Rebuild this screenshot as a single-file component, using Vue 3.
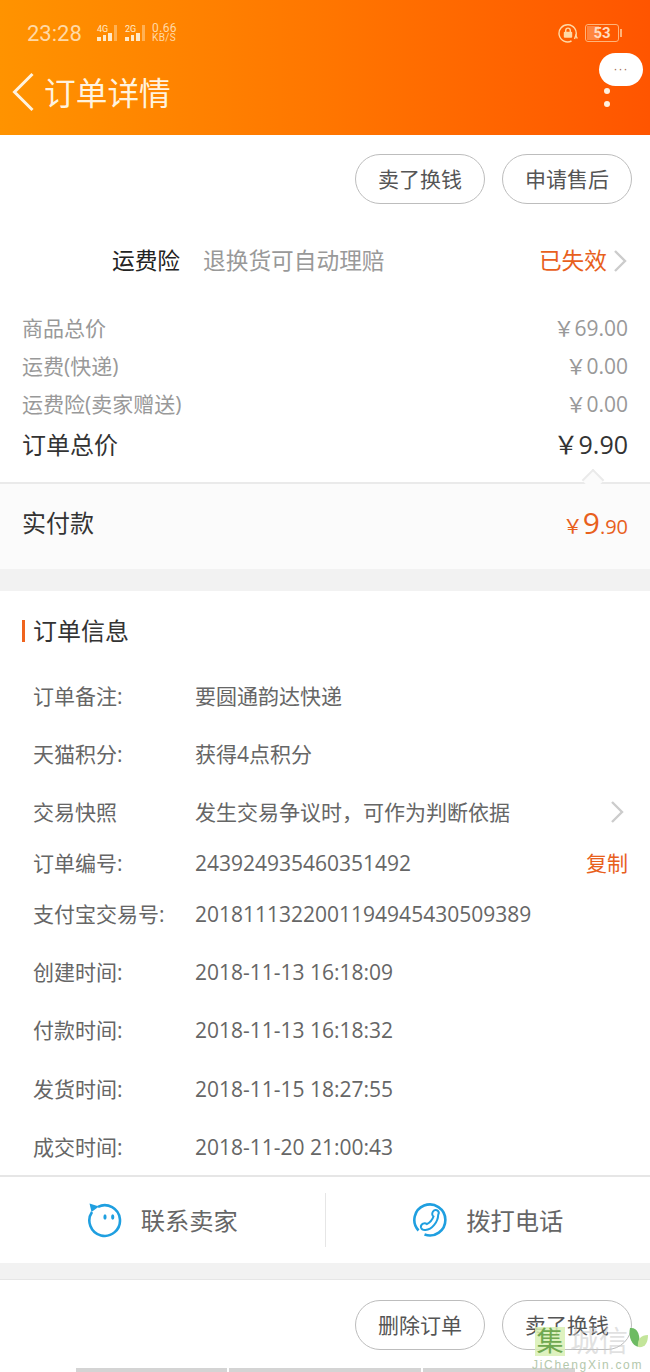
<template>
  <div class="page">
    <header class="header">
      <div class="status-bar">
        <span class="time">23:28</span>
        <div class="signal">
          <span class="net">4G</span>
          <i style="height: 4px"></i><i style="height: 6px"></i><i style="height: 8px"></i><i class="dim" style="height: 16px"></i>
        </div>
        <div class="signal">
          <span class="net">2G</span>
          <i style="height: 4px"></i><i style="height: 6px"></i><i style="height: 8px"></i><i class="dim" style="height: 16px"></i>
        </div>
        <div class="speed"><span>0.66</span><span>KB/S</span></div>
        <div class="status-right">
          <svg class="rotate-lock" viewBox="0 0 20 20" fill="none" stroke="currentColor" stroke-width="1.4">
            <path d="M17.8 13A8.6 8.6 0 1 0 13.500 18"/>
            <path d="M16.500 16l1.300-3.500 1.500 3"/>
            <rect x="5.800" y="8.800" width="8.400" height="6" rx="1" fill="currentColor" stroke="none"/>
            <path d="M7.700 9V7.400a2.300 2.300 0 0 1 4.600 0V9"/>
          </svg>
          <div class="battery"><span class="battery-fill"></span><span class="battery-num">53</span></div>
          <span class="battery-tip"></span>
        </div>
      </div>
      <div class="title-bar">
        <svg class="back" viewBox="0 0 24 40" fill="none" stroke="currentColor" stroke-width="3">
          <polyline points="21.5,2 3.500,20 21.5,38"></polyline>
        </svg>
        <span class="title">订单详情</span>
        <div class="more">
          <div class="bubble">···</div>
          <i></i>
          <i></i>
        </div>
      </div>
    </header>

    <div class="btn-row top">
      <button class="pill">卖了换钱</button>
      <button class="pill">申请售后</button>
    </div>

    <div class="insurance">
      <span class="ins-name">运费险</span>
      <span class="ins-desc">退换货可自动理赔</span>
      <span class="ins-state">已失效</span>
      <svg class="chevron" viewBox="0 0 14 22" fill="none" stroke="currentColor" stroke-width="2.400">
        <polyline points="2,1 12,11 2,21"></polyline>
      </svg>
    </div>

    <div class="prices">
      <div v-for="p in prices" :key="p.label" class="price-row">
        <span>{{ p.label }}</span>
        <span>￥{{ p.value }}</span>
      </div>
      <div class="price-row total">
        <span>订单总价</span>
        <span class="total-value">￥9.90</span>
      </div>
    </div>

    <div class="paid">
      <span class="notch"></span>
      <span class="paid-label">实付款</span>
      <span class="paid-value"><span class="paid-yen">￥</span><span class="paid-int">9</span>.90</span>
    </div>

    <div class="band"></div>

    <section class="info">
      <h2 class="info-title">订单信息</h2>
      <div
        v-for="row in rows"
        :key="row.label"
        class="info-row"
        :style="{ height: row.h + 'px' }"
      >
        <span class="info-label">{{ row.label }}</span>
        <span class="info-value" :class="{ 'is-cjk': row.cjk }">{{ row.value }}</span>
        <svg v-if="row.arrow" class="chevron info-arrow" viewBox="0 0 14 22" fill="none" stroke="currentColor" stroke-width="2.400">
          <polyline points="2,1 12,11 2,21"></polyline>
        </svg>
        <span v-if="row.copy" class="copy">复制</span>
      </div>
    </section>

    <div class="actions">
      <div class="action">
        <svg class="action-icon" viewBox="0 0 36 36" fill="none" stroke="#1f9fe0" stroke-width="2.600">
          <path d="M5 10A15.300 15.300 0 1 0 11 4.800"/>
          <path d="M2.500 1.500 L12 4.500 L4.500 10 Z" fill="#1f9fe0" stroke="none"/>
          <ellipse cx="18" cy="15" rx="1.600" ry="2.800" fill="#1f9fe0" stroke="none"/>
          <ellipse cx="25.700" cy="15" rx="1.600" ry="2.800" fill="#1f9fe0" stroke="none"/>
        </svg>
        <span class="action-text">联系卖家</span>
      </div>
      <div class="action">
        <svg class="action-icon" viewBox="0 0 36 36" fill="none" stroke="#1f9fe0" stroke-width="2.600">
          <path d="M6.500 28.500A15.500 15.500 0 1 1 12.500 32.500"/>
          <path d="M21 9.500c1.500-2 3.500-2 4.800-.8 1.200 1.200 1.200 2.800.4 4C26 20 20 27.500 13.500 28c-2 .2-4-1-4.500-2.500-.5-1.800.5-3 2-3.800 1.500-.7 2.800-.5 3.800.4C18 20.500 20.500 17.500 21.500 14.500 20 13.500 19.800 11.200 21 9.500z" stroke-width="2"/>
        </svg>
        <span class="action-text">拨打电话</span>
      </div>
    </div>

    <div class="band small"></div>

    <div class="btn-row bottom">
      <button class="pill">删除订单</button>
      <button class="pill">卖了换钱</button>
    </div>

    <div class="home-bars">
      <i style="width: 151px"></i>
      <i style="width: 192px"></i>
      <i style="width: 152px"></i>
    </div>

    <div class="watermark">
      <span class="wm-box">集</span>
      <span class="wm-name">城信</span>
      <svg class="wm-leaf" viewBox="0 0 20 24">
        <path d="M2 1c7-1 11 6 9 19C4 19 0 10 2 1z" fill="#6dbb63"/>
        <path d="M10 20c-1-8 3-12 10-12 0 8-3 13-10 12z" fill="#c3e59a"/>
      </svg>
      <span class="wm-url">JiChengXin.com</span>
    </div>
  </div>
</template>

<script setup>
const prices = [
  { label: '商品总价', value: '69.00' },
  { label: '运费(快递)', value: '0.00' },
  { label: '运费险(卖家赠送)', value: '0.00' }
]

const rows = [
  { label: '订单备注:', value: '要圆通韵达快递', h: 58, cjk: true },
  { label: '天猫积分:', value: '获得4点积分', h: 58, cjk: true },
  { label: '交易快照', value: '发生交易争议时，可作为判断依据', h: 58, cjk: true, arrow: true },
  { label: '订单编号:', value: '243924935460351492', h: 44, copy: true },
  { label: '支付宝交易号:', value: '2018111322001194945430509389', h: 58 },
  { label: '创建时间:', value: '2018-11-13 16:18:09', h: 58 },
  { label: '付款时间:', value: '2018-11-13 16:18:32', h: 58 },
  { label: '发货时间:', value: '2018-11-15 18:27:55', h: 59 },
  { label: '成交时间:', value: '2018-11-20 21:00:43', h: 58 }
]
</script>

<style>
html, body {
  margin: 0;
  background: #fff;
}
</style>

<style scoped>
.page {
  position: relative;
  width: 650px;
  height: 1372px;
  overflow: hidden;
  background: #fff;
  font-family: "Open Sans", "Noto Sans CJK SC", sans-serif;
  color: #333;
}

.header {
  height: 135px;
  background: linear-gradient(90deg, #ff9300 0%, #ff7600 50%, #ff5500 100%);
  color: #fff;
}

.status-bar {
  height: 66px;
  display: flex;
  align-items: center;
  padding-right: 28px;
  padding-left: 27px;
  color: #ffd9a6;
}

.time {
  width: 54px;
  margin-right: 15px;
  font-family: Roboto, sans-serif;
  font-size: 22px;
}

.signal {
  position: relative;
  display: flex;
  align-items: flex-end;
  gap: 2px;
  height: 16px;
  padding-left: 1px;
  margin-right: 7px;
}

.signal i {
  width: 3.500px;
  background: #ffe9c8;
}

.signal i.dim {
  background: rgba(255, 220, 170, 0.5);
}

.net {
  position: absolute;
  left: 1px;
  top: 0;
  font-family: Roboto, sans-serif;
  font-size: 9px;
  line-height: 8px;
  color: #ffe9c8;
}

.speed {
  display: flex;
  flex-direction: column;
  font-family: Roboto, sans-serif;
  font-size: 10px;
  line-height: 9px;
  letter-spacing: 0.4px;
}

.speed span:first-child {
  font-size: 12px;
}

.status-right {
  margin-left: auto;
  display: flex;
  align-items: center;
}

.rotate-lock {
  width: 20px;
  height: 20px;
  margin-right: 7px;
}

.battery {
  position: relative;
  box-sizing: border-box;
  width: 34px;
  height: 18px;
  border: 1px solid #ffb47a;
  border-radius: 3px;
  display: flex;
  align-items: center;
  justify-content: center;
}

.battery-fill {
  position: absolute;
  left: 1px;
  top: 1px;
  bottom: 1px;
  width: 12px;
  background: rgba(255, 200, 160, 0.4);
}

.battery-num {
  position: relative;
  font-family: Roboto, sans-serif;
  font-size: 15px;
  font-weight: 700;
  line-height: 16px;
  color: #ffdcc0;
}

.battery-tip {
  width: 2px;
  height: 8px;
  margin-left: 1px;
  background: #ffb47a;
}

.title-bar {
  position: relative;
  height: 52px;
  display: flex;
  align-items: center;
  padding-left: 11px;
}

.back {
  width: 24px;
  height: 40px;
  margin-right: 9px;
  color: #fff3df;
}

.title {
  padding-bottom: 2px;
  font-family: "Noto Sans CJK SC", sans-serif;
  font-size: 31.700px;
  line-height: 50px;
  color: #fff3df;
}

.more {
  position: absolute;
  left: 599px;
  top: -13px;
  width: 44px;
  display: flex;
  flex-direction: column;
  align-items: center;
}

.bubble {
  width: 44px;
  height: 33px;
  border-radius: 17px;
  background: #fff;
  color: #a06a50;
  font-family: "Liberation Sans", sans-serif;
  font-size: 12px;
  letter-spacing: 1px;
  line-height: 33px;
  text-align: center;
}

.more i {
  width: 6px;
  height: 6px;
  margin-top: 7px;
  margin-right: 28px;
  border-radius: 50%;
  background: #fff0e0;
}

.more i:first-of-type {
  margin-top: 2px;
}

.btn-row {
  display: flex;
  justify-content: flex-end;
  gap: 17px;
  padding-right: 18px;
}

.btn-row.top {
  padding-top: 19px;
}

.btn-row.bottom {
  padding-top: 20px;
}

.pill {
  width: 130px;
  height: 50px;
  padding: 0 0 2px;
  box-sizing: border-box;
  background: #fff;
  border: 1px solid #bdbdbd;
  border-radius: 25px;
  font-family: inherit;
  font-size: 21px;
  color: #555;
}

.insurance {
  display: flex;
  align-items: center;
  height: 40px;
  margin-top: 37px;
  padding: 0 23px 0 112px;
  font-size: 22.700px;
}

.insurance span {
  padding-bottom: 4px;
}

.ins-name {
  color: #222;
  margin-right: 23px;
}

.ins-desc {
  color: #999;
}

.ins-state {
  margin-left: auto;
  margin-right: 6px;
  color: #e8601c;
}

.chevron {
  width: 14px;
  height: 22px;
  color: #ccc;
}

.prices {
  margin-top: 28px;
  padding: 0 22px;
  font-size: 21px;
  color: #999;
}

.price-row {
  display: flex;
  justify-content: space-between;
  align-items: center;
  box-sizing: border-box;
  height: 38px;
  padding-bottom: 2px;
}

.price-row.total {
  height: 44px;
  padding-bottom: 4px;
  font-size: 24px;
  color: #333;
}

.total-value {
  font-size: 25px;
}

.paid {
  position: relative;
  display: flex;
  justify-content: space-between;
  align-items: center;
  box-sizing: border-box;
  height: 87px;
  margin-top: 15px;
  padding: 0 22px 8px;
  background: #fbfbfb;
  border-top: 2px solid #eaeaea;
}

.notch {
  position: absolute;
  left: 585px;
  top: -12px;
  width: 16px;
  height: 16px;
  box-sizing: border-box;
  background: #fbfbfb;
  border-top: 2px solid #eaeaea;
  border-left: 2px solid #eaeaea;
  transform: rotate(45deg);
}

.paid-label {
  padding-bottom: 2px;
  font-size: 24px;
}

.paid-value {
  font-size: 20px;
  color: #e8601c;
}

.paid-yen {
  font-size: 20px;
}

.paid-int {
  font-size: 30px;
}

.band {
  height: 22px;
  background: #f2f2f2;
}

.band.small {
  box-sizing: border-box;
  height: 17px;
  border-bottom: 1px solid #e6e6e6;
}

.info {
  padding-left: 33px;
  height: 584px;
  box-sizing: border-box;
}

.info-title {
  position: relative;
  margin: 0;
  height: 76px;
  font-size: 24px;
  font-weight: 400;
  line-height: 80px;
  color: #333;
}

.info-title::before {
  content: "";
  position: absolute;
  left: -11px;
  top: 29px;
  width: 3px;
  height: 22px;
  background: #f0641e;
}

.info-row {
  display: flex;
  align-items: center;
  padding-right: 22px;
  font-size: 21px;
  color: #666;
}

.info-label {
  width: 162px;
  flex-shrink: 0;
  padding-bottom: 2px;
  white-space: nowrap;
}

.info-value {
  white-space: nowrap;
}

.info-value.is-cjk {
  padding-bottom: 2px;
}

.info-arrow {
  margin-left: auto;
  margin-right: 4px;
}

.copy {
  margin-left: auto;
  padding-bottom: 3px;
  color: #e8601c;
}

.actions {
  display: flex;
  box-sizing: border-box;
  height: 88px;
  border-top: 2px solid #e6e6e6;
  padding: 16px 0;
  font-size: 24.300px;
  color: #666;
}

.action {
  flex: 1;
  display: flex;
  align-items: center;
  justify-content: center;
  gap: 18px;
}

.action + .action {
  border-left: 1px solid #e6e6e6;
}

.action-icon {
  width: 36px;
  height: 36px;
}

.action-text {
  padding-bottom: 2px;
}

.home-bars {
  position: absolute;
  left: 76px;
  bottom: 0;
  display: flex;
  gap: 2px;
}

.home-bars i {
  height: 4px;
  background: #d4d4d4;
}

.watermark {
  position: absolute;
  left: 534px;
  top: 1326px;
  width: 116px;
  height: 46px;
}

.wm-box {
  position: absolute;
  left: 1px;
  top: 1px;
  box-sizing: border-box;
  width: 30px;
  height: 29px;
  background: rgba(216, 240, 180, 0.85);
  color: #6fa850;
  font-size: 27px;
  line-height: 28px;
  text-align: center;
}

.wm-name {
  position: absolute;
  left: 36px;
  top: -3px;
  font-size: 29px;
  line-height: 36px;
  color: rgba(200, 200, 200, 0.55);
}

.wm-leaf {
  position: absolute;
  left: 94px;
  top: 1px;
  width: 20px;
  height: 24px;
}

.wm-url {
  position: absolute;
  left: -2px;
  top: 33px;
  font-family: "Liberation Sans", sans-serif;
  font-size: 12px;
  line-height: 13px;
  letter-spacing: 1.700px;
  color: #b4c8ac;
}
</style>
